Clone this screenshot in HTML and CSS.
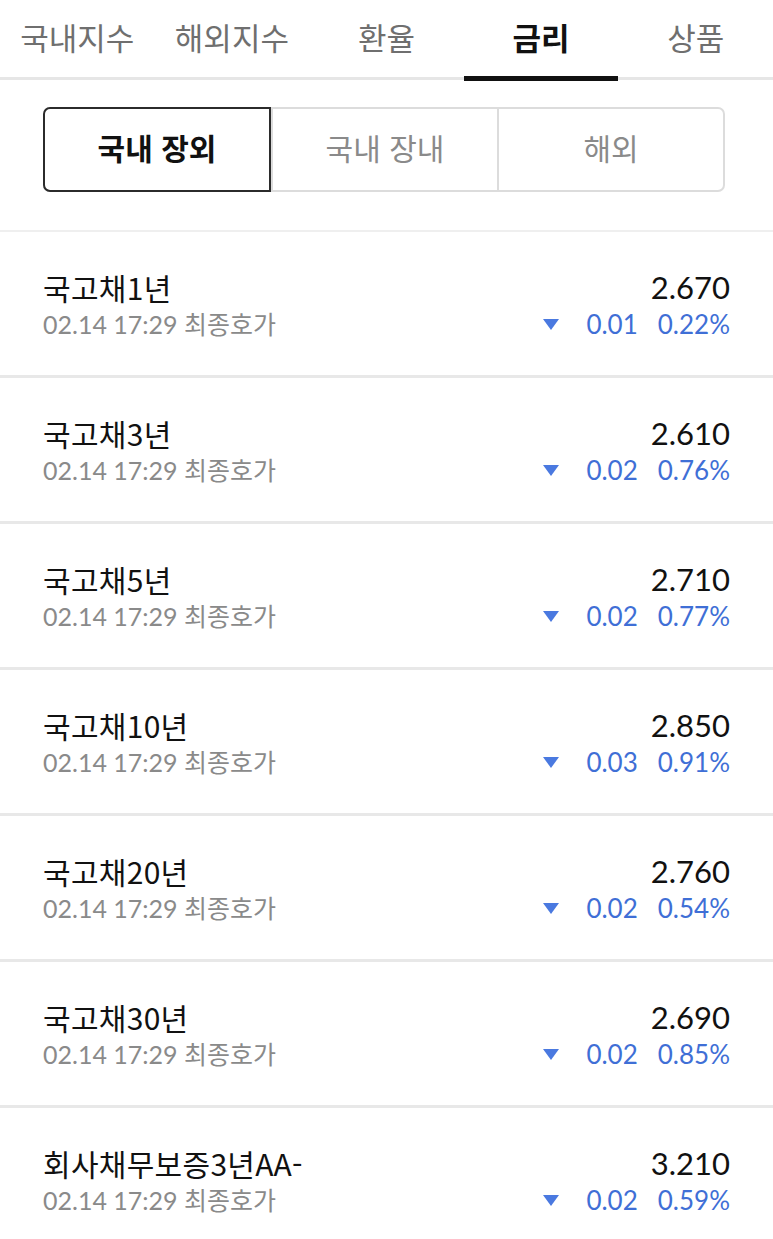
FILE: index.html
```html
<!DOCTYPE html>
<html lang="ko">
<head>
<meta charset="utf-8">
<link rel="stylesheet" href="styles.css">
</head>
<body>
<nav class="tabs">
  <div class="tab">국내지수</div>
  <div class="tab">해외지수</div>
  <div class="tab">환율</div>
  <div class="tab active">금리</div>
  <div class="tab">상품</div>
</nav>
<div class="seg">
  <div class="seg-item on">국내 장외</div>
  <div class="seg-item">국내 장내</div>
  <div class="seg-item">해외</div>
</div>
<ul class="list">
  <li class="row"><div class="l"><div class="name">국고채1년</div><div class="sub">02.14 17:29 최종호가</div></div><div class="r"><div class="val">2.670</div><div class="chg"><span class="tri"></span><span class="d">0.01</span><span class="p">0.22%</span></div></div></li>
  <li class="row"><div class="l"><div class="name">국고채3년</div><div class="sub">02.14 17:29 최종호가</div></div><div class="r"><div class="val">2.610</div><div class="chg"><span class="tri"></span><span class="d">0.02</span><span class="p">0.76%</span></div></div></li>
  <li class="row"><div class="l"><div class="name">국고채5년</div><div class="sub">02.14 17:29 최종호가</div></div><div class="r"><div class="val">2.710</div><div class="chg"><span class="tri"></span><span class="d">0.02</span><span class="p">0.77%</span></div></div></li>
  <li class="row"><div class="l"><div class="name">국고채10년</div><div class="sub">02.14 17:29 최종호가</div></div><div class="r"><div class="val">2.850</div><div class="chg"><span class="tri"></span><span class="d">0.03</span><span class="p">0.91%</span></div></div></li>
  <li class="row"><div class="l"><div class="name">국고채20년</div><div class="sub">02.14 17:29 최종호가</div></div><div class="r"><div class="val">2.760</div><div class="chg"><span class="tri"></span><span class="d">0.02</span><span class="p">0.54%</span></div></div></li>
  <li class="row"><div class="l"><div class="name">국고채30년</div><div class="sub">02.14 17:29 최종호가</div></div><div class="r"><div class="val">2.690</div><div class="chg"><span class="tri"></span><span class="d">0.02</span><span class="p">0.85%</span></div></div></li>
  <li class="row"><div class="l"><div class="name">회사채무보증3년AA-</div><div class="sub">02.14 17:29 최종호가</div></div><div class="r"><div class="val">3.210</div><div class="chg"><span class="tri"></span><span class="d">0.02</span><span class="p">0.59%</span></div></div></li>
</ul>
</body>
</html>
```
FILE: styles.css
```css
* { box-sizing: border-box; }
html, body { margin: 0; padding: 0; background: #fff; }
body {
  font-family: "Lato", "Noto Sans CJK KR", sans-serif;
  color: #111;
  width: 773px;
  overflow: hidden;
}
.tabs {
  display: flex;
  height: 80px;
  border-bottom: 3px solid #e6e6e6;
}
.tab {
  flex: 1;
  position: relative;
  text-align: center;
  font-family: "Noto Sans CJK KR", sans-serif;
  font-size: 31px;
  line-height: 40px;
  padding-top: 17px;
  color: #6f6f6f;
}
.tab.active {
  color: #111;
  font-weight: 700;
}
.tab.active::after {
  content: "";
  position: absolute;
  left: 0;
  right: 0;
  bottom: -4px;
  height: 5px;
  background: #111;
}
.seg {
  display: flex;
  margin: 27px 48px 0 43px;
  height: 85px;
  border: 2px solid #dcdcdc;
  border-radius: 7px;
}
.seg-item {
  flex: 1;
  display: flex;
  align-items: center;
  justify-content: center;
  font-family: "Noto Sans CJK KR", sans-serif;
  font-size: 30px;
  padding-bottom: 6px;
  color: #8a8a8a;
  border-left: 2px solid #dcdcdc;
}
.seg-item:first-child { border-left: none; }
.seg-item.on {
  margin: -2px 0 -2px -2px;
  border: 2px solid #2b2b2b;
  border-radius: 7px 0 0 7px;
  color: #111;
  font-weight: 700;
}
.list {
  list-style: none;
  margin: 38px 0 0 0;
  padding: 0;
  border-top: 2px solid #efefef;
}
.row {
  display: flex;
  justify-content: space-between;
  align-items: flex-start;
  height: 146px;
  padding: 35px 43px 0 43px;
  border-bottom: 3px solid #e8e8e8;
}
.name {
  font-family: "Noto Sans CJK KR", sans-serif;
  font-size: 30px;
  line-height: 40px;
  letter-spacing: 0.3px;
  color: #111;
}
.sub {
  font-family: "Lato", "Noto Sans CJK KR", sans-serif;
  font-size: 25px;
  line-height: 34px;
  color: #8a8a8a;
}
.r { text-align: right; }
.val {
  font-size: 31px;
  line-height: 40px;
  color: #111;
}
.chg {
  display: flex;
  align-items: center;
  justify-content: flex-end;
  font-size: 26px;
  line-height: 34px;
  color: #3f6fd6;
}
.tri {
  width: 0;
  height: 0;
  border-left: 8px solid transparent;
  border-right: 8px solid transparent;
  border-top: 11px solid #4a79e0;
  margin-right: 27px;
}
.d { margin-right: 20px; }
```
